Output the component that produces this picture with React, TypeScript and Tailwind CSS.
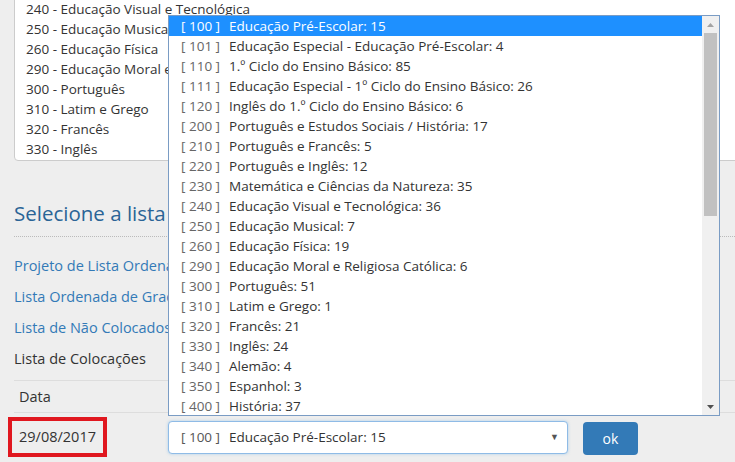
import React from "react";

const topList = [
  "230 - Matemática e Ciências da Natureza",
  "240 - Educação Visual e Tecnológica",
  "250 - Educação Musical",
  "260 - Educação Física",
  "290 - Educação Moral e Religiosa Católica",
  "300 - Português",
  "310 - Latim e Grego",
  "320 - Francês",
  "330 - Inglês",
];

const options: [string, string][] = [
  ["100", "Educação Pré-Escolar: 15"],
  ["101", "Educação Especial - Educação Pré-Escolar: 4"],
  ["110", "1.º Ciclo do Ensino Básico: 85"],
  ["111", "Educação Especial - 1º Ciclo do Ensino Básico: 26"],
  ["120", "Inglês do 1.º Ciclo do Ensino Básico: 6"],
  ["200", "Português e Estudos Sociais / História: 17"],
  ["210", "Português e Francês: 5"],
  ["220", "Português e Inglês: 12"],
  ["230", "Matemática e Ciências da Natureza: 35"],
  ["240", "Educação Visual e Tecnológica: 36"],
  ["250", "Educação Musical: 7"],
  ["260", "Educação Física: 19"],
  ["290", "Educação Moral e Religiosa Católica: 6"],
  ["300", "Português: 51"],
  ["310", "Latim e Grego: 1"],
  ["320", "Francês: 21"],
  ["330", "Inglês: 24"],
  ["340", "Alemão: 4"],
  ["350", "Espanhol: 3"],
  ["400", "História: 37"],
];

const font = { fontFamily: '"Open Sans", "Noto Sans", sans-serif' };

export default function App() {
  return (
    <div
      className="relative w-[735px] h-[462px] overflow-hidden bg-[#eeeeee] text-[#333333]"
      style={font}
    >
      {/* top list box */}
      <div className="ml-[14px] -mt-[22px] w-[740px] rounded-[4px] border border-[#cccccc] bg-white pl-[11px] pb-[1px]">
        {topList.map((t) => (
          <div key={t} className="h-5 leading-5 text-[13.5px] whitespace-nowrap">
            {t}
          </div>
        ))}
      </div>

      <div className="ml-[14px] mt-[38px]">
        <div className="text-[20.5px] leading-7 text-[#2a6496] whitespace-nowrap">
          Selecione a lista que pretende consultar
        </div>
        <div className="mt-[9px] border-t border-dotted border-[#bbbbbb]" />
        <div className="mt-[18px] flex flex-col gap-[10px] text-[14.5px] leading-[21px]">
          <div className="text-[#337ab7] whitespace-nowrap">Projeto de Lista Ordenada</div>
          <div className="text-[#337ab7] whitespace-nowrap">Lista Ordenada de Graduação</div>
          <div className="text-[#337ab7] whitespace-nowrap">Lista de Não Colocados</div>
          <div className="whitespace-nowrap">Lista de Colocações</div>
        </div>
        <div className="mt-[11px] border-t border-[#dddddd]">
          <div className="h-[32px] flex items-center border-b border-[#dddddd] pl-[5px] text-[14.5px]">
            Data
          </div>
          <div className="h-[48px] flex items-center text-[14.5px]">
            <div className="w-[154px] pl-[5px]">29/08/2017</div>
            <div className="w-[400px] h-[33px] rounded-[4px] border border-[#8fbbe6] bg-white flex items-center pl-[12px] pr-[8px] text-[13.5px] shadow-[0_0_3px_rgba(102,175,233,0.5)]">
              <span className="text-[#555]">[ 100 ]</span>
              <span className="ml-[9px] flex-1">Educação Pré-Escolar: 15</span>
              <span className="text-[9px] text-[#555]">▼</span>
            </div>
            <button className="ml-[15px] mt-[3px] w-[55px] h-[33px] rounded-[4px] bg-[#337ab7] text-white text-[14px]">
              ok
            </button>
          </div>
        </div>
      </div>

      {/* red highlight annotation */}
      <div className="absolute left-[8px] top-[417px] w-[99px] h-[40px] border-[4px] border-[#e0171f]" />

      {/* open dropdown */}
      <div className="absolute left-[168px] top-[15px] w-[552px] h-[401px] border border-[#7a9cc4] bg-white flex">
        <div className="flex-1 flex flex-col">
          {options.map(([c, l], i) => (
            <div
              key={c}
              className={
                "h-5 flex items-center pl-[12px] text-[13.5px] whitespace-nowrap " +
                (i === 0 ? "bg-[#1e90ff] text-white" : "text-[#333]")
              }
            >
              <span className={i === 0 ? "" : "text-[#666]"}>[ {c} ]</span>
              <span className="ml-[9px]">{l}</span>
            </div>
          ))}
        </div>
        <div className="w-[17px] bg-[#f0f0f0] flex flex-col items-center">
          <div className="h-[17px] flex items-center justify-center">
            <svg width="7" height="4" viewBox="0 0 7 4">
              <path d="M0 4 L3.5 0 L7 4 Z" fill="#a3a3a3" />
            </svg>
          </div>
          <div className="w-[13px] h-[183px] bg-[#c1c1c1]" />
          <div className="flex-1" />
          <div className="h-[17px] flex items-center justify-center">
            <svg width="7" height="4" viewBox="0 0 7 4">
              <path d="M0 0 L7 0 L3.5 4 Z" fill="#505050" />
            </svg>
          </div>
        </div>
      </div>
    </div>
  );
}
